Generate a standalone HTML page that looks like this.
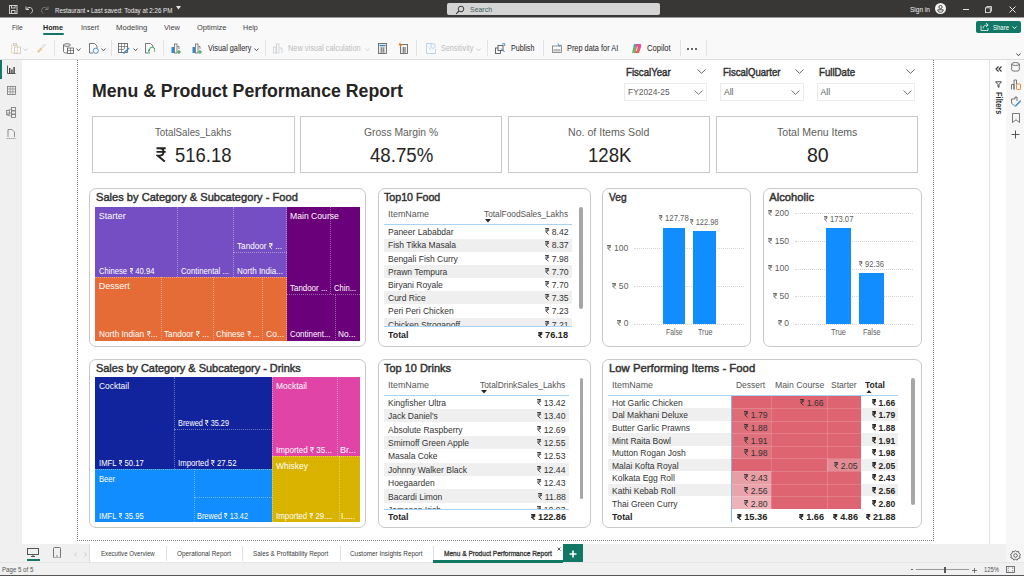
<!DOCTYPE html><html><head><meta charset="utf-8"><style>*{margin:0;padding:0}
html,body{width:1024px;height:576px;overflow:hidden;background:#fff;font-family:"Liberation Sans",sans-serif;}
.a{position:absolute}
.t{position:absolute;white-space:nowrap;line-height:normal;transform-origin:0 0}
.rs{display:inline-block;width:.5em;height:.69em;vertical-align:baseline;margin-right:0}
</style></head><body>
<div class="a" style="left:0.00px;top:0.00px;width:1024.00px;height:17.00px;background:#383735;"></div>
<div class="a" style="left:0.00px;top:17.00px;width:1024.00px;height:1.00px;background:#9a9998;"></div>
<svg class="a" style="left:8.00px;top:4.00px;" width="10" height="10" viewBox="0 0 10 10" fill="none"><rect x="1.5" y="1.5" width="7.5" height="8" stroke="#cfcfcf" stroke-width="1"/><rect x="3.5" y="1.5" width="3.5" height="2.5" stroke="#cfcfcf" stroke-width="1"/><rect x="3.5" y="6.5" width="3.5" height="3" stroke="#cfcfcf" stroke-width="1"/></svg>
<svg class="a" style="left:24.00px;top:4.00px;" width="10" height="10" viewBox="0 0 10 10" fill="none"><path d="M2 2.5 V5.5 H5" stroke="#cfcfcf" stroke-width="1"/><path d="M2.3 5.3 C4 2.5 8.5 3 8.5 6.5 C8.5 8 7.5 9 6.5 9.5" stroke="#cfcfcf" stroke-width="1"/></svg>
<svg class="a" style="left:40.00px;top:4.00px;" width="10" height="10" viewBox="0 0 10 10" fill="none"><path d="M8 2.5 V5.5 H5" stroke="#777" stroke-width="1"/><path d="M7.7 5.3 C6 2.5 1.5 3 1.5 6.5 C1.5 8 2.5 9 3.5 9.5" stroke="#777" stroke-width="1"/></svg>
<div class="t" style="left:54.50px;top:7.00px;font-size:6.686px;color:#ececec;transform:scaleX(0.9283);">Restaurant • Last saved: Today at 2:26 PM</div>
<svg class="a" style="left:175.50px;top:6.00px;" width="5" height="4" viewBox="0 0 5 4" fill="none"><path d="M0 0 H5 L2.5 3.5Z" fill="#e8e8e8"/></svg>
<div class="a" style="left:446.50px;top:3.00px;width:213.00px;height:12.00px;background:#d4d4d4;border-radius:2px;"></div>
<svg class="a" style="left:455.00px;top:4.50px;" width="10" height="10" viewBox="0 0 10 10" fill="none"><circle cx="6" cy="4" r="2.8" stroke="#3d3d3d" stroke-width="1"/><path d="M4 6 L1.2 8.8" stroke="#3d3d3d" stroke-width="1.1"/></svg>
<div class="t" style="left:470.00px;top:5.00px;font-size:7.267px;color:#3f5f63;transform:scaleX(0.9577);">Search</div>
<div class="t" style="left:910.00px;top:5.00px;font-size:7.267px;color:#f0f0f0;transform:scaleX(0.9022);">Sign in</div>
<svg class="a" style="left:935.00px;top:3.00px;" width="11" height="11" viewBox="0 0 11 11" fill="none"><circle cx="5.5" cy="5.5" r="5.5" fill="#f2f2f2"/><circle cx="5.5" cy="4" r="1.6" stroke="#383735" stroke-width=".9"/><path d="M2.8 6.8 H8.2 C8.2 8.5 7 9.3 5.5 9.3 C4 9.3 2.8 8.5 2.8 6.8Z" stroke="#383735" stroke-width=".9"/></svg>
<div class="a" style="left:962.50px;top:9.00px;width:6.00px;height:1.00px;background:#e0e0e0;"></div>
<svg class="a" style="left:985.00px;top:5.50px;" width="7" height="7" viewBox="0 0 7 7" fill="none"><rect x=".5" y="1.8" width="4.8" height="4.8" stroke="#e0e0e0" stroke-width=".9"/><path d="M1.8 1.8 V.5 H6.5 V5.2 H5.3" stroke="#e0e0e0" stroke-width=".9"/></svg>
<svg class="a" style="left:1009.00px;top:6.00px;" width="7" height="7" viewBox="0 0 7 7" fill="none"><path d="M.5 .5 L6.5 6.5 M6.5 .5 L.5 6.5" stroke="#f0f0f0" stroke-width="1"/></svg>
<div class="a" style="left:0.00px;top:18.00px;width:1024.00px;height:41.00px;background:#f9f9f9;"></div>
<div class="a" style="left:0.00px;top:59.00px;width:1024.00px;height:1.00px;background:#dcdcdc;"></div>
<div class="t" style="left:12.20px;top:23.00px;font-size:7.703px;color:#424242;transform:scaleX(0.8719);">File</div>
<div class="t" style="left:43.40px;top:23.00px;font-size:7.703px;color:#242424;transform:scaleX(0.9317);font-weight:bold;">Home</div>
<div class="t" style="left:80.50px;top:23.00px;font-size:7.703px;color:#424242;transform:scaleX(0.9310);">Insert</div>
<div class="t" style="left:115.60px;top:23.00px;font-size:7.703px;color:#424242;transform:scaleX(1.0033);">Modeling</div>
<div class="t" style="left:163.75px;top:23.00px;font-size:7.703px;color:#424242;transform:scaleX(0.9653);">View</div>
<div class="t" style="left:196.60px;top:23.00px;font-size:7.703px;color:#424242;transform:scaleX(0.9694);">Optimize</div>
<div class="t" style="left:243.30px;top:23.00px;font-size:7.703px;color:#424242;transform:scaleX(0.9298);">Help</div>
<div class="a" style="left:43.00px;top:33.00px;width:20.50px;height:2.00px;background:#117865;border-radius:1px;"></div>
<div class="a" style="left:54.40px;top:40.00px;width:1.00px;height:16.00px;background:#e3e3e3;"></div>
<div class="a" style="left:110.60px;top:40.00px;width:1.00px;height:16.00px;background:#e3e3e3;"></div>
<div class="a" style="left:162.50px;top:40.00px;width:1.00px;height:16.00px;background:#e3e3e3;"></div>
<div class="a" style="left:264.50px;top:40.00px;width:1.00px;height:16.00px;background:#e3e3e3;"></div>
<div class="a" style="left:416.40px;top:40.00px;width:1.00px;height:16.00px;background:#e3e3e3;"></div>
<div class="a" style="left:486.60px;top:40.00px;width:1.00px;height:16.00px;background:#e3e3e3;"></div>
<div class="a" style="left:543.30px;top:40.00px;width:1.00px;height:16.00px;background:#e3e3e3;"></div>
<div class="a" style="left:679.70px;top:40.00px;width:1.00px;height:16.00px;background:#e3e3e3;"></div>
<div class="a" style="left:705.50px;top:40.00px;width:1.00px;height:16.00px;background:#e3e3e3;"></div>
<svg class="a" style="left:10.50px;top:43.00px;" width="10" height="11" viewBox="0 0 10 11" fill="none"><rect x=".5" y="2" width="6" height="8" stroke="#e8b86a" stroke-width=".8" stroke-dasharray="1 .6"/><rect x="3.5" y="4" width="6" height="6.5" stroke="#c8c8c8" stroke-width=".8"/><rect x="2.5" y=".5" width="3" height="2" stroke="#c8c8c8" stroke-width=".7"/></svg>
<svg class="a" style="left:22.50px;top:47.50px;" width="5" height="3.5" viewBox="0 0 5 3.5" fill="none"><path d="M.5 .5 L2.5 2.7 L4.5 .5" stroke="#c8c8c8" stroke-width=".9"/></svg>
<svg class="a" style="left:36.00px;top:43.00px;" width="10" height="10" viewBox="0 0 10 10" fill="none"><path d="M1 8.5 L5 4.5 L6.5 6 L2.5 10Z" fill="#f0c890"/><path d="M5.5 4 L8.5 1 L9.5 2 L6.5 5Z" stroke="#d0d0d0" stroke-width=".8"/></svg>
<svg class="a" style="left:62.50px;top:43.00px;" width="11" height="11" viewBox="0 0 11 11" fill="none"><ellipse cx="4" cy="2" rx="3.5" ry="1.3" stroke="#555" stroke-width=".8"/><path d="M.5 2 V8.5 C.5 9.5 2 10 4 10" stroke="#555" stroke-width=".8"/><rect x="4.5" y="5" width="6" height="5.5" stroke="#555" stroke-width=".8"/><path d="M4.5 7.5 H10.5 M7.5 5 V10.5" stroke="#555" stroke-width=".6"/></svg>
<svg class="a" style="left:75.50px;top:47.50px;" width="5" height="3.5" viewBox="0 0 5 3.5" fill="none"><path d="M.5 .5 L2.5 2.7 L4.5 .5" stroke="#424242" stroke-width=".9"/></svg>
<svg class="a" style="left:88.50px;top:43.00px;" width="10" height="11" viewBox="0 0 10 11" fill="none"><path d="M.5 .5 H5.5 L8 3 V5" stroke="#555" stroke-width=".8"/><path d="M.5 .5 V10 H4" stroke="#555" stroke-width=".8"/><circle cx="6.8" cy="7.8" r="2.6" stroke="#3a86c8" stroke-width=".9"/></svg>
<svg class="a" style="left:100.50px;top:47.50px;" width="5" height="3.5" viewBox="0 0 5 3.5" fill="none"><path d="M.5 .5 L2.5 2.7 L4.5 .5" stroke="#424242" stroke-width=".9"/></svg>
<svg class="a" style="left:118.00px;top:43.00px;" width="12" height="11" viewBox="0 0 12 11" fill="none"><rect x=".5" y=".5" width="9" height="9" stroke="#555" stroke-width=".8"/><path d="M.5 3.5 H9.5 M.5 6.5 H6 M3.5 .5 V9.5 M6.5 .5 V6" stroke="#555" stroke-width=".6"/><path d="M5 10 L10.5 4.5 L11.5 5.5 L6 11Z" fill="#3a86c8"/></svg>
<svg class="a" style="left:132.50px;top:47.50px;" width="5" height="3.5" viewBox="0 0 5 3.5" fill="none"><path d="M.5 .5 L2.5 2.7 L4.5 .5" stroke="#424242" stroke-width=".9"/></svg>
<svg class="a" style="left:145.00px;top:43.00px;" width="10" height="11" viewBox="0 0 10 11" fill="none"><path d="M.5 .5 H5.5 L8 3 V4.5 M.5 .5 V10 H3.5" stroke="#555" stroke-width=".8"/><path d="M4.5 8 A2.8 2.8 0 1 1 9.3 8.8" stroke="#2f9e5a" stroke-width="1"/><path d="M5 10.5 A2.8 2.8 0 0 1 4.5 6" stroke="#2f9e5a" stroke-width="1"/></svg>
<svg class="a" style="left:171.00px;top:43.00px;" width="10" height="11" viewBox="0 0 10 11" fill="none"><rect x=".5" y="4" width="2.5" height="6" fill="#3a86c8"/><rect x="3.5" y="1" width="2.5" height="9" stroke="#555" stroke-width=".7"/><path d="M6.5 3.5 H8 V6" stroke="#555" stroke-width=".7"/><path d="M8 7 V11 M6 9 H10" stroke="#2f9e5a" stroke-width="1.1"/></svg>
<svg class="a" style="left:192.00px;top:43.00px;" width="10" height="11" viewBox="0 0 10 11" fill="none"><rect x=".5" y="4" width="2.5" height="6" fill="#3a86c8"/><rect x="3.5" y="1" width="2.5" height="9" stroke="#555" stroke-width=".7"/><path d="M6.5 3.5 H8 V6" stroke="#555" stroke-width=".7"/><path d="M8 7 V11 M6 9 H10" stroke="#2f9e5a" stroke-width="1.1"/></svg>
<div class="t" style="left:207.50px;top:44.00px;font-size:8.140px;color:#242424;transform:scaleX(0.8988);">Visual gallery</div>
<svg class="a" style="left:254.00px;top:47.50px;" width="5" height="3.5" viewBox="0 0 5 3.5" fill="none"><path d="M.5 .5 L2.5 2.7 L4.5 .5" stroke="#424242" stroke-width=".9"/></svg>
<svg class="a" style="left:272.50px;top:43.00px;" width="10" height="11" viewBox="0 0 10 11" fill="none"><rect x=".5" y="4" width="2.5" height="6" stroke="#c8c8c8" stroke-width=".7"/><rect x="3.5" y="1" width="2.5" height="9" stroke="#c8c8c8" stroke-width=".7"/><path d="M6.5 5 H9 V10" stroke="#b0c8dc" stroke-width=".7"/></svg>
<div class="t" style="left:288.30px;top:44.00px;font-size:8.140px;color:#bdbdbd;transform:scaleX(0.9095);">New visual calculation</div>
<svg class="a" style="left:365.00px;top:47.50px;" width="5" height="3.5" viewBox="0 0 5 3.5" fill="none"><path d="M.5 .5 L2.5 2.7 L4.5 .5" stroke="#cfcfcf" stroke-width=".9"/></svg>
<svg class="a" style="left:378.00px;top:43.00px;" width="9" height="11" viewBox="0 0 9 11" fill="none"><rect x=".5" y=".5" width="8" height="10" stroke="#555" stroke-width=".8"/><rect x="1.5" y="1.8" width="6" height="1.5" fill="#3a86c8"/><path d="M1.8 5 H7.2 M1.8 7 H7.2 M1.8 9 H7.2 M3.6 4.5 V9.5 M5.4 4.5 V9.5" stroke="#555" stroke-width=".6"/></svg>
<svg class="a" style="left:398.00px;top:42.00px;" width="10" height="12" viewBox="0 0 10 12" fill="none"><rect x="2.5" y="2.5" width="7" height="9" stroke="#555" stroke-width=".8"/><path d="M3.8 6 H8.2 M3.8 8 H8.2 M3.8 10 H8.2 M5.5 5 V10.5 M7 5 V10.5" stroke="#555" stroke-width=".6"/><path d="M2 0 L.5 3.5 H2.5 L1.5 6 L4.5 2.5 H2.8Z" fill="#e87a1e"/></svg>
<svg class="a" style="left:426.00px;top:43.00px;" width="10" height="11" viewBox="0 0 10 11" fill="none"><path d="M.5 .5 H6 M.5 .5 V10.5 H9.5 V6" stroke="#a8cce8" stroke-width=".8"/><circle cx="7" cy="3" r="2.3" stroke="#a8cce8" stroke-width=".8"/><path d="M2.5 4.5 L5 7" stroke="#a8cce8" stroke-width=".8"/></svg>
<div class="t" style="left:440.60px;top:44.00px;font-size:8.140px;color:#bdbdbd;transform:scaleX(0.8859);">Sensitivity</div>
<svg class="a" style="left:476.00px;top:47.50px;" width="5" height="3.5" viewBox="0 0 5 3.5" fill="none"><path d="M.5 .5 L2.5 2.7 L4.5 .5" stroke="#cfcfcf" stroke-width=".9"/></svg>
<svg class="a" style="left:495.00px;top:43.00px;" width="11" height="11" viewBox="0 0 11 11" fill="none"><rect x=".5" y="5" width="5" height="5.5" stroke="#444" stroke-width=".8"/><rect x="3" y="2.5" width="5" height="5" stroke="#444" stroke-width=".8" fill="#f9f9f9"/><path d="M6 5.5 L9.5 9" stroke="#3a86c8" stroke-width="1"/><path d="M7 1 L9.5 .5 L9.8 3" stroke="#3a86c8" stroke-width=".9"/></svg>
<div class="t" style="left:510.80px;top:44.00px;font-size:8.140px;color:#242424;transform:scaleX(0.8781);">Publish</div>
<svg class="a" style="left:551.50px;top:43.00px;" width="10" height="10" viewBox="0 0 10 10" fill="none"><rect x=".5" y="3" width="9" height="6.5" stroke="#777" stroke-width=".8"/><rect x="1.5" y="6" width="7" height="2.5" fill="#bbb"/><path d="M6 .5 L7 3 L9.5 2" stroke="#3a86c8" stroke-width=".9"/></svg>
<div class="t" style="left:567.00px;top:44.00px;font-size:8.140px;color:#242424;transform:scaleX(0.9067);">Prep data for AI</div>
<svg class="a" style="left:630.50px;top:43.00px;" width="11" height="11" viewBox="0 0 11 11" fill="none"><defs><linearGradient id="cg" x1="0" y1="0" x2="1" y2="1"><stop offset="0" stop-color="#2f8cf0"/><stop offset=".5" stop-color="#52c46a"/><stop offset="1" stop-color="#f0a030"/></linearGradient><linearGradient id="cg2" x1="1" y1="0" x2="0" y2="1"><stop offset="0" stop-color="#e040c0"/><stop offset="1" stop-color="#f07030"/></linearGradient></defs><path d="M3 1 H7 L5 10 H1 Z" fill="url(#cg)"/><path d="M5 1 H9 C10.5 1 10.5 3 10 4 L8 10 H4Z" fill="url(#cg2)"/><path d="M5.3 8 L6.3 3.5" stroke="#fff" stroke-width=".8"/></svg>
<div class="t" style="left:646.60px;top:44.00px;font-size:8.140px;color:#242424;transform:scaleX(0.9371);">Copilot</div>
<div class="a" style="left:687.00px;top:48.00px;width:2.00px;height:2.00px;background:#333;border-radius:1px;"></div>
<div class="a" style="left:691.00px;top:48.00px;width:2.00px;height:2.00px;background:#333;border-radius:1px;"></div>
<div class="a" style="left:695.00px;top:48.00px;width:2.00px;height:2.00px;background:#333;border-radius:1px;"></div>
<div class="a" style="left:976.00px;top:20.50px;width:45.00px;height:12.00px;background:#117865;border-radius:2px;"></div>
<svg class="a" style="left:980.00px;top:22.00px;" width="10" height="9" viewBox="0 0 10 9" fill="none"><path d="M1 3.5 V8.5 H8 V6" stroke="#fff" stroke-width=".8"/><path d="M3 6.5 C3 4 5 3 7.5 3 M6 1 L8.2 3 L6 5" stroke="#fff" stroke-width=".8"/></svg>
<div class="t" style="left:992.50px;top:24.00px;font-size:6.831px;color:#ffffff;transform:scaleX(0.8781);">Share</div>
<svg class="a" style="left:1011.50px;top:25.50px;" width="5" height="3.5" viewBox="0 0 5 3.5" fill="none"><path d="M.5 .5 L2.5 2.7 L4.5 .5" stroke="#ffffff" stroke-width=".9"/></svg>
<svg class="a" style="left:1015.50px;top:52.50px;" width="5" height="3.5" viewBox="0 0 5 3.5" fill="none"><path d="M.5 .5 L2.5 2.7 L4.5 .5" stroke="#333333" stroke-width=".9"/></svg>
<div class="a" style="left:0.00px;top:60.00px;width:22.00px;height:502.00px;background:#f0f0f0;"></div>
<div class="a" style="left:21.50px;top:60.00px;width:0.50px;height:484.00px;background:#e4e4e4;"></div>
<div class="a" style="left:0.00px;top:59.50px;width:2.00px;height:19.80px;background:#117865;"></div>
<svg class="a" style="left:6.50px;top:64.50px;" width="9" height="9" viewBox="0 0 9 9" fill="none"><path d="M.5 .5 V8.5 H8.5" stroke="#444" stroke-width=".9"/><rect x="2" y="3" width="1.4" height="5" fill="#444"/><rect x="4.2" y="4.5" width="1.4" height="3.5" fill="#444"/><rect x="6.4" y="2" width="1.4" height="6" fill="#444"/></svg>
<svg class="a" style="left:6.50px;top:86.00px;" width="9" height="9" viewBox="0 0 9 9" fill="none"><rect x=".5" y=".5" width="8" height="8" stroke="#777" stroke-width=".8"/><path d="M.5 3 H8.5 M.5 5.8 H8.5 M3.2 .5 V8.5 M5.8 .5 V8.5" stroke="#777" stroke-width=".6"/></svg>
<svg class="a" style="left:6.00px;top:106.50px;" width="10" height="11" viewBox="0 0 10 11" fill="none"><rect x="5.5" y=".5" width="4" height="3" stroke="#777" stroke-width=".8"/><rect x="5.5" y="4" width="4" height="3" stroke="#777" stroke-width=".8"/><rect x="5.5" y="7.5" width="4" height="3" stroke="#777" stroke-width=".8"/><path d="M.5 4 L5.5 2 M.5 6 H5.5 M.5 8 L5.5 9" stroke="#777" stroke-width=".7"/><rect x=".5" y="3.5" width="3" height="4" stroke="#777" stroke-width=".7"/></svg>
<svg class="a" style="left:6.00px;top:128.50px;" width="10" height="10" viewBox="0 0 10 10" fill="none"><path d="M2 8 V.5 H6 L8.5 3 V8" stroke="#777" stroke-width=".8"/><path d="M.5 9.5 H9.5" stroke="#777" stroke-width=".8" stroke-dasharray="1.2 .8"/></svg>
<div class="a" style="left:22.00px;top:60.00px;width:967.00px;height:484.00px;background:#ffffff;"></div>
<div class="a" style="left:77px;top:60px;width:855px;height:480px;border-right:1px dotted #7a7a7a;border-left:1px dotted #7a7a7a;border-bottom:1px dotted #7a7a7a;"></div>
<div class="a" style="left:988.50px;top:60.00px;width:17.50px;height:484.00px;background:#ffffff;border-left:1.5px solid #e2e2e2;box-sizing:border-box;"></div>
<div class="a" style="left:1006.00px;top:60.00px;width:18.00px;height:484.00px;background:#f7f7f7;"></div>
<svg class="a" style="left:994.50px;top:66.00px;" width="7" height="6" viewBox="0 0 7 6" fill="none"><path d="M3.5 .5 L1 3 L3.5 5.5 M6.5 .5 L4 3 L6.5 5.5" stroke="#333" stroke-width="1.1"/></svg>
<svg class="a" style="left:995.00px;top:80.50px;" width="7" height="7" viewBox="0 0 7 7" fill="none"><path d="M.6 .8 H6.4 L4 3.6 V6.4 L3 5.8 V3.6 Z" stroke="#333" stroke-width=".9" stroke-linejoin="round"/></svg>
<div class="t" style="left:993.9px;top:91.6px;font-size:8.7px;font-weight:bold;color:#333;transform-origin:0 0;transform:translate(10px,0) rotate(90deg) scaleX(.86);">Filters</div>
<svg class="a" style="left:1011.00px;top:62.00px;" width="9" height="10" viewBox="0 0 9 10" fill="none"><ellipse cx="4.5" cy="2" rx="3.8" ry="1.5" stroke="#555" stroke-width=".8"/><path d="M.7 2 V8 C.7 9.5 8.3 9.5 8.3 8 V2" stroke="#555" stroke-width=".8"/></svg>
<svg class="a" style="left:1010.50px;top:79.00px;" width="10" height="11" viewBox="0 0 10 11" fill="none"><path d="M.5 10.5 V5.5 H3 V10.5 M3 10.5 V1 H5.5 V5" stroke="#555" stroke-width=".8"/><rect x="5.5" y="5" width="4" height="5.5" rx=".8" stroke="#e87a1e" stroke-width=".9"/></svg>
<svg class="a" style="left:1010.50px;top:96.00px;" width="10" height="11" viewBox="0 0 10 11" fill="none"><path d="M.5 6 V3 H4 V1 H6 V5" stroke="#555" stroke-width=".8"/><path d="M.5 6 C.5 8 2 9 3.5 9" stroke="#555" stroke-width=".8"/><path d="M3 10.5 L9.5 4 L10 5.5 L5 10.5Z" fill="#3a86c8"/></svg>
<svg class="a" style="left:1011.50px;top:113.00px;" width="8" height="10" viewBox="0 0 8 10" fill="none"><path d="M.5 .5 H7.5 V9.5 L4 6.8 L.5 9.5Z" stroke="#555" stroke-width=".8"/></svg>
<svg class="a" style="left:1010.50px;top:130.00px;" width="9" height="9" viewBox="0 0 9 9" fill="none"><path d="M4.5 .5 V8.5 M.5 4.5 H8.5" stroke="#444" stroke-width=".9"/></svg>
<div class="t" style="left:92.20px;top:81.00px;font-size:18.023px;color:#252423;transform:scaleX(0.9825);font-weight:bold;">Menu &amp; Product Performance Report</div>
<div class="t" style="left:625.70px;top:67.00px;font-size:10.320px;color:#333333;transform:scaleX(0.9358);-webkit-text-stroke:.45px #333333;">FiscalYear</div>
<svg class="a" style="left:697.30px;top:68.80px;" width="9" height="5" viewBox="0 0 9 5" fill="none"><path d="M.5 .5 L4.5 4.3 L8.5 .5" stroke="#555" stroke-width=".9"/></svg>
<div class="a" style="left:624.00px;top:82.50px;width:82.80px;height:18.00px;background:#fff;border:1px solid #ebebeb;box-sizing:border-box;"></div>
<div class="t" style="left:628.00px;top:87.00px;font-size:8.576px;color:#605e5c;transform:scaleX(0.9819);">FY2024-25</div>
<svg class="a" style="left:694.30px;top:89.50px;" width="9" height="5" viewBox="0 0 9 5" fill="none"><path d="M.5 .5 L4.5 4.3 L8.5 .5" stroke="#666" stroke-width=".9"/></svg>
<div class="t" style="left:722.60px;top:67.00px;font-size:10.320px;color:#333333;transform:scaleX(0.9275);-webkit-text-stroke:.45px #333333;">FiscalQuarter</div>
<svg class="a" style="left:794.60px;top:68.80px;" width="9" height="5" viewBox="0 0 9 5" fill="none"><path d="M.5 .5 L4.5 4.3 L8.5 .5" stroke="#555" stroke-width=".9"/></svg>
<div class="a" style="left:720.00px;top:82.50px;width:83.70px;height:18.00px;background:#fff;border:1px solid #ebebeb;box-sizing:border-box;"></div>
<div class="t" style="left:724.00px;top:87.00px;font-size:8.576px;color:#605e5c;">All</div>
<svg class="a" style="left:791.20px;top:89.50px;" width="9" height="5" viewBox="0 0 9 5" fill="none"><path d="M.5 .5 L4.5 4.3 L8.5 .5" stroke="#666" stroke-width=".9"/></svg>
<div class="t" style="left:818.60px;top:67.00px;font-size:10.320px;color:#333333;transform:scaleX(0.9401);-webkit-text-stroke:.45px #333333;">FullDate</div>
<svg class="a" style="left:906.40px;top:68.80px;" width="9" height="5" viewBox="0 0 9 5" fill="none"><path d="M.5 .5 L4.5 4.3 L8.5 .5" stroke="#555" stroke-width=".9"/></svg>
<div class="a" style="left:816.60px;top:82.50px;width:98.90px;height:18.00px;background:#fff;border:1px solid #ebebeb;box-sizing:border-box;"></div>
<div class="t" style="left:820.60px;top:87.00px;font-size:8.576px;color:#605e5c;">All</div>
<svg class="a" style="left:903.00px;top:89.50px;" width="9" height="5" viewBox="0 0 9 5" fill="none"><path d="M.5 .5 L4.5 4.3 L8.5 .5" stroke="#666" stroke-width=".9"/></svg>
<div class="a" style="left:92.00px;top:115.50px;width:202.50px;height:57.00px;background:#fff;border:1px solid #c8c8c8;box-sizing:border-box;"></div>
<div class="t" style="left:155.10px;top:126.00px;font-size:10.901px;color:#605e5c;transform:scaleX(0.8938);">TotalSales_Lakhs</div>
<svg class="a" style="left:156.10px;top:147.20px;" width="10.2" height="15.2" viewBox="0 0 10.2 15.2" fill="none"><path d="M.5 1.2 H9.7 M.5 4.9 H9.7 M.8 1.2 H3.8 C7 1.2 7.5 3.4 7.5 4.9 C7.5 7.3 5.6 8.6 3.4 8.6 H1.6 L8.8 14.6" stroke="#252423" stroke-width="1.9"/></svg>
<div class="t" style="left:174.90px;top:144.00px;font-size:20.349px;color:#252423;transform:scaleX(0.9071);">516.18</div>
<div class="a" style="left:300.00px;top:115.50px;width:202.00px;height:57.00px;background:#fff;border:1px solid #c8c8c8;box-sizing:border-box;"></div>
<div class="t" style="left:363.90px;top:126.00px;font-size:10.901px;color:#605e5c;transform:scaleX(0.9504);">Gross Margin %</div>
<div class="t" style="left:370.40px;top:144.00px;font-size:20.349px;color:#252423;transform:scaleX(0.9167);">48.75%</div>
<div class="a" style="left:507.50px;top:115.50px;width:202.50px;height:57.00px;background:#fff;border:1px solid #c8c8c8;box-sizing:border-box;"></div>
<div class="t" style="left:568.10px;top:126.00px;font-size:10.901px;color:#605e5c;transform:scaleX(0.9733);">No. of Items Sold</div>
<div class="t" style="left:588.00px;top:144.00px;font-size:20.349px;color:#252423;transform:scaleX(0.9163);">128K</div>
<div class="a" style="left:715.50px;top:115.50px;width:202.50px;height:57.00px;background:#fff;border:1px solid #c8c8c8;box-sizing:border-box;"></div>
<div class="t" style="left:776.55px;top:126.00px;font-size:10.901px;color:#605e5c;transform:scaleX(0.9696);">Total Menu Items</div>
<div class="t" style="left:806.90px;top:144.00px;font-size:20.349px;color:#252423;transform:scaleX(0.9597);">80</div>
<div class="a" style="left:89.20px;top:187.60px;width:276.60px;height:159.40px;background:#fff;border:1px solid #c8c8c8;border-radius:7px;box-sizing:border-box;"></div>
<div class="t" style="left:95.70px;top:191.00px;font-size:11.192px;color:#333333;transform:scaleX(0.9924);-webkit-text-stroke:.45px #333333;">Sales by Category &amp; Subcategory - Food</div>
<div class="a" style="left:95.00px;top:206.80px;width:191.70px;height:70.00px;background:#744EC2;"></div>
<div class="a" style="left:95.00px;top:276.80px;width:191.70px;height:64.00px;background:#E66C37;"></div>
<div class="a" style="left:286.70px;top:206.80px;width:73.10px;height:134.00px;background:#6B007B;"></div>
<div class="a" style="left:177.40px;top:206.80px;width:0;height:70.00px;border-left:1px dotted rgba(255,255,255,.38)"></div>
<div class="a" style="left:232.60px;top:206.80px;width:0;height:70.00px;border-left:1px dotted rgba(255,255,255,.38)"></div>
<div class="a" style="left:233.30px;top:252.10px;width:53.40px;height:0;border-top:1px dotted rgba(255,255,255,.38)"></div>
<div class="a" style="left:160.50px;top:276.80px;width:0;height:63.50px;border-left:1px dotted rgba(255,255,255,.38)"></div>
<div class="a" style="left:212.70px;top:276.80px;width:0;height:63.50px;border-left:1px dotted rgba(255,255,255,.38)"></div>
<div class="a" style="left:262.30px;top:276.80px;width:0;height:63.50px;border-left:1px dotted rgba(255,255,255,.38)"></div>
<div class="a" style="left:330.00px;top:206.80px;width:0;height:87.20px;border-left:1px dotted rgba(255,255,255,.38)"></div>
<div class="a" style="left:286.70px;top:294.00px;width:73.10px;height:0;border-top:1px dotted rgba(255,255,255,.38)"></div>
<div class="a" style="left:334.60px;top:294.70px;width:0;height:45.60px;border-left:1px dotted rgba(255,255,255,.38)"></div>
<div class="a" style="left:286.40px;top:206.80px;width:0;height:133.50px;border-left:1px dotted rgba(255,255,255,.38)"></div>
<div class="a" style="left:95.00px;top:276.60px;width:191.70px;height:0;border-top:1px dotted rgba(255,255,255,.38)"></div>
<div class="t" style="left:98.80px;top:211.00px;font-size:9.012px;color:#ffffff;">Starter</div>
<div class="t" style="left:98.80px;top:266.00px;font-size:9.012px;color:#ffffff;transform:scaleX(0.8517);">Chinese <svg class="rs" viewBox="0 0 10 14"><path d="M.5 1.2H9.5M.5 4.6H9.5M.8 1.2H3.5C6.3 1.2 7 3.2 7 4.6 7 6.8 5.2 8 3.2 8H1.5L8.2 13.6" stroke="currentColor" stroke-width="2" fill="none"/></svg> 40.94</div>
<div class="t" style="left:181.00px;top:266.00px;font-size:9.012px;color:#ffffff;transform:scaleX(0.8643);">Continental ...</div>
<div class="t" style="left:236.50px;top:241.00px;font-size:9.012px;color:#ffffff;transform:scaleX(0.9085);">Tandoor <svg class="rs" viewBox="0 0 10 14"><path d="M.5 1.2H9.5M.5 4.6H9.5M.8 1.2H3.5C6.3 1.2 7 3.2 7 4.6 7 6.8 5.2 8 3.2 8H1.5L8.2 13.6" stroke="currentColor" stroke-width="2" fill="none"/></svg> ...</div>
<div class="t" style="left:236.50px;top:266.00px;font-size:9.012px;color:#ffffff;transform:scaleX(0.8928);">North India...</div>
<div class="t" style="left:98.80px;top:281.00px;font-size:9.012px;color:#ffffff;">Dessert</div>
<div class="t" style="left:98.80px;top:329.00px;font-size:9.012px;color:#ffffff;transform:scaleX(0.9207);">North Indian <svg class="rs" viewBox="0 0 10 14"><path d="M.5 1.2H9.5M.5 4.6H9.5M.8 1.2H3.5C6.3 1.2 7 3.2 7 4.6 7 6.8 5.2 8 3.2 8H1.5L8.2 13.6" stroke="currentColor" stroke-width="2" fill="none"/></svg>...</div>
<div class="t" style="left:164.00px;top:329.00px;font-size:9.012px;color:#ffffff;transform:scaleX(0.9085);">Tandoor <svg class="rs" viewBox="0 0 10 14"><path d="M.5 1.2H9.5M.5 4.6H9.5M.8 1.2H3.5C6.3 1.2 7 3.2 7 4.6 7 6.8 5.2 8 3.2 8H1.5L8.2 13.6" stroke="currentColor" stroke-width="2" fill="none"/></svg> ...</div>
<div class="t" style="left:216.00px;top:329.00px;font-size:9.012px;color:#ffffff;transform:scaleX(0.8695);">Chinese <svg class="rs" viewBox="0 0 10 14"><path d="M.5 1.2H9.5M.5 4.6H9.5M.8 1.2H3.5C6.3 1.2 7 3.2 7 4.6 7 6.8 5.2 8 3.2 8H1.5L8.2 13.6" stroke="currentColor" stroke-width="2" fill="none"/></svg> ...</div>
<div class="t" style="left:265.50px;top:329.00px;font-size:9.012px;color:#ffffff;transform:scaleX(0.9471);">Co...</div>
<div class="t" style="left:290.00px;top:211.00px;font-size:9.012px;color:#ffffff;transform:scaleX(0.9584);">Main Course</div>
<div class="t" style="left:290.00px;top:283.00px;font-size:9.012px;color:#ffffff;transform:scaleX(0.8818);">Tandoor ...</div>
<div class="t" style="left:333.50px;top:283.00px;font-size:9.012px;color:#ffffff;transform:scaleX(0.8458);">Chin...</div>
<div class="t" style="left:290.00px;top:329.00px;font-size:9.012px;color:#ffffff;transform:scaleX(0.8799);">Continent...</div>
<div class="t" style="left:338.00px;top:329.00px;font-size:9.012px;color:#ffffff;transform:scaleX(0.9207);">No...</div>
<div class="a" style="left:377.70px;top:187.60px;width:212.90px;height:159.40px;background:#fff;border:1px solid #c8c8c8;border-radius:7px;box-sizing:border-box;"></div>
<div class="t" style="left:384.20px;top:191.00px;font-size:11.192px;color:#333333;transform:scaleX(0.9528);-webkit-text-stroke:.45px #333333;">Top10 Food</div>
<div class="t" style="left:387.70px;top:209.00px;font-size:9.157px;color:#555555;transform:scaleX(0.9725);">ItemName</div>
<div class="t" style="left:484.20px;top:209.00px;font-size:9.157px;color:#555555;transform:scaleX(0.9094);">TotalFoodSales_Lakhs</div>
<svg class="a" style="left:484.50px;top:219.00px;" width="6" height="3.5" viewBox="0 0 6 3.5" fill="none"><path d="M0 0 H6 L3 3.5Z" fill="#252423"/></svg>
<div class="a" style="left:384.00px;top:223.60px;width:188.20px;height:1.00px;background:#a9d3f5;"></div>
<div class="t" style="left:387.70px;top:226.00px;font-size:9.448px;color:#333333;transform:scaleX(0.9000);">Paneer Lababdar</div>
<div class="t" style="left:544.64px;top:226.00px;font-size:9.448px;color:#333333;transform:scaleX(0.9200);"><svg class="rs" viewBox="0 0 10 14"><path d="M.5 1.2H9.5M.5 4.6H9.5M.8 1.2H3.5C6.3 1.2 7 3.2 7 4.6 7 6.8 5.2 8 3.2 8H1.5L8.2 13.6" stroke="currentColor" stroke-width="2" fill="none"/></svg> 8.42</div>
<div class="a" style="left:384.00px;top:238.50px;width:188.20px;height:13.20px;background:#efefef;"></div>
<div class="t" style="left:387.70px;top:239.00px;font-size:9.448px;color:#333333;transform:scaleX(0.9000);">Fish Tikka Masala</div>
<div class="t" style="left:544.64px;top:239.00px;font-size:9.448px;color:#333333;transform:scaleX(0.9200);"><svg class="rs" viewBox="0 0 10 14"><path d="M.5 1.2H9.5M.5 4.6H9.5M.8 1.2H3.5C6.3 1.2 7 3.2 7 4.6 7 6.8 5.2 8 3.2 8H1.5L8.2 13.6" stroke="currentColor" stroke-width="2" fill="none"/></svg> 8.37</div>
<div class="t" style="left:387.70px;top:253.00px;font-size:9.448px;color:#333333;transform:scaleX(0.9000);">Bengali Fish Curry</div>
<div class="t" style="left:544.64px;top:253.00px;font-size:9.448px;color:#333333;transform:scaleX(0.9200);"><svg class="rs" viewBox="0 0 10 14"><path d="M.5 1.2H9.5M.5 4.6H9.5M.8 1.2H3.5C6.3 1.2 7 3.2 7 4.6 7 6.8 5.2 8 3.2 8H1.5L8.2 13.6" stroke="currentColor" stroke-width="2" fill="none"/></svg> 7.98</div>
<div class="a" style="left:384.00px;top:264.90px;width:188.20px;height:13.20px;background:#efefef;"></div>
<div class="t" style="left:387.70px;top:266.00px;font-size:9.448px;color:#333333;transform:scaleX(0.9000);">Prawn Tempura</div>
<div class="t" style="left:544.64px;top:266.00px;font-size:9.448px;color:#333333;transform:scaleX(0.9200);"><svg class="rs" viewBox="0 0 10 14"><path d="M.5 1.2H9.5M.5 4.6H9.5M.8 1.2H3.5C6.3 1.2 7 3.2 7 4.6 7 6.8 5.2 8 3.2 8H1.5L8.2 13.6" stroke="currentColor" stroke-width="2" fill="none"/></svg> 7.70</div>
<div class="t" style="left:387.70px;top:279.00px;font-size:9.448px;color:#333333;transform:scaleX(0.9000);">Biryani Royale</div>
<div class="t" style="left:544.64px;top:279.00px;font-size:9.448px;color:#333333;transform:scaleX(0.9200);"><svg class="rs" viewBox="0 0 10 14"><path d="M.5 1.2H9.5M.5 4.6H9.5M.8 1.2H3.5C6.3 1.2 7 3.2 7 4.6 7 6.8 5.2 8 3.2 8H1.5L8.2 13.6" stroke="currentColor" stroke-width="2" fill="none"/></svg> 7.70</div>
<div class="a" style="left:384.00px;top:291.30px;width:188.20px;height:13.20px;background:#efefef;"></div>
<div class="t" style="left:387.70px;top:292.00px;font-size:9.448px;color:#333333;transform:scaleX(0.9000);">Curd Rice</div>
<div class="t" style="left:544.64px;top:292.00px;font-size:9.448px;color:#333333;transform:scaleX(0.9200);"><svg class="rs" viewBox="0 0 10 14"><path d="M.5 1.2H9.5M.5 4.6H9.5M.8 1.2H3.5C6.3 1.2 7 3.2 7 4.6 7 6.8 5.2 8 3.2 8H1.5L8.2 13.6" stroke="currentColor" stroke-width="2" fill="none"/></svg> 7.35</div>
<div class="t" style="left:387.70px;top:305.00px;font-size:9.448px;color:#333333;transform:scaleX(0.9000);">Peri Peri Chicken</div>
<div class="t" style="left:544.64px;top:305.00px;font-size:9.448px;color:#333333;transform:scaleX(0.9200);"><svg class="rs" viewBox="0 0 10 14"><path d="M.5 1.2H9.5M.5 4.6H9.5M.8 1.2H3.5C6.3 1.2 7 3.2 7 4.6 7 6.8 5.2 8 3.2 8H1.5L8.2 13.6" stroke="currentColor" stroke-width="2" fill="none"/></svg> 7.23</div>
<div class="a" style="left:384.00px;top:317.70px;width:188.20px;height:8.80px;background:#efefef;"></div>
<div class="a" style="left:384px;top:318px;width:190px;height:8.5px;overflow:hidden;"><div class="t" style="left:3.70px;top:1.00px;font-size:9.448px;color:#333333;transform:scaleX(0.9000);">Chicken Stroganoff</div><div class="t" style="left:160.64px;top:1.00px;font-size:9.448px;color:#333333;transform:scaleX(0.9200);"><svg class="rs" viewBox="0 0 10 14"><path d="M.5 1.2H9.5M.5 4.6H9.5M.8 1.2H3.5C6.3 1.2 7 3.2 7 4.6 7 6.8 5.2 8 3.2 8H1.5L8.2 13.6" stroke="currentColor" stroke-width="2" fill="none"/></svg> 7.21</div></div>
<div class="a" style="left:384.00px;top:326.40px;width:188.20px;height:1.00px;background:#a9d3f5;"></div>
<div class="t" style="left:388.30px;top:330.00px;font-size:9.012px;color:#252423;transform:scaleX(0.9842);font-weight:bold;">Total</div>
<div class="t" style="left:538.30px;top:330.00px;font-size:9.012px;color:#252423;transform:scaleX(1.0160);font-weight:bold;"><svg class="rs" viewBox="0 0 10 14"><path d="M.5 1.3H9.5M.5 4.7H9.5M.8 1.3H3.5C6.3 1.3 7 3.2 7 4.7 7 6.8 5.2 8 3.2 8H1.8L8.2 13.4" stroke="currentColor" stroke-width="2.5" fill="none"/></svg> 76.18</div>
<div class="a" style="left:579.20px;top:207.40px;width:4.20px;height:101.40px;background:#a6a6a6;border-radius:2px;"></div>
<div class="a" style="left:602.30px;top:187.60px;width:148.30px;height:159.40px;background:#fff;border:1px solid #c8c8c8;border-radius:7px;box-sizing:border-box;"></div>
<div class="t" style="left:608.80px;top:191.00px;font-size:11.192px;color:#333333;transform:scaleX(0.9125);-webkit-text-stroke:.45px #333333;">Veg</div>
<div class="a" style="left:634.00px;top:248.10px;width:109.70px;height:0;border-top:1px dotted #d6d6d6;"></div>
<div class="t" style="left:607.45px;top:243.00px;font-size:8.576px;color:#605e5c;"><svg class="rs" viewBox="0 0 10 14"><path d="M.5 1.2H9.5M.5 4.6H9.5M.8 1.2H3.5C6.3 1.2 7 3.2 7 4.6 7 6.8 5.2 8 3.2 8H1.5L8.2 13.6" stroke="currentColor" stroke-width="2" fill="none"/></svg> 100</div>
<div class="a" style="left:634.00px;top:285.80px;width:109.70px;height:0;border-top:1px dotted #d6d6d6;"></div>
<div class="t" style="left:612.21px;top:281.00px;font-size:8.576px;color:#605e5c;"><svg class="rs" viewBox="0 0 10 14"><path d="M.5 1.2H9.5M.5 4.6H9.5M.8 1.2H3.5C6.3 1.2 7 3.2 7 4.6 7 6.8 5.2 8 3.2 8H1.5L8.2 13.6" stroke="currentColor" stroke-width="2" fill="none"/></svg> 50</div>
<div class="a" style="left:634.00px;top:323.60px;width:109.70px;height:0;border-top:1px dotted #d6d6d6;"></div>
<div class="t" style="left:616.97px;top:318.00px;font-size:8.576px;color:#605e5c;"><svg class="rs" viewBox="0 0 10 14"><path d="M.5 1.2H9.5M.5 4.6H9.5M.8 1.2H3.5C6.3 1.2 7 3.2 7 4.6 7 6.8 5.2 8 3.2 8H1.5L8.2 13.6" stroke="currentColor" stroke-width="2" fill="none"/></svg> 0</div>
<div class="a" style="left:662.60px;top:227.70px;width:22.70px;height:96.40px;background:#118DFF;"></div>
<div class="a" style="left:692.80px;top:231.00px;width:23.10px;height:93.10px;background:#118DFF;"></div>
<div class="t" style="left:659.05px;top:213.00px;font-size:8.576px;color:#605e5c;transform:scaleX(0.9039);"><svg class="rs" viewBox="0 0 10 14"><path d="M.5 1.2H9.5M.5 4.6H9.5M.8 1.2H3.5C6.3 1.2 7 3.2 7 4.6 7 6.8 5.2 8 3.2 8H1.5L8.2 13.6" stroke="currentColor" stroke-width="2" fill="none"/></svg> 127.78</div>
<div class="t" style="left:690.30px;top:217.00px;font-size:8.576px;color:#605e5c;transform:scaleX(0.8644);"><svg class="rs" viewBox="0 0 10 14"><path d="M.5 1.2H9.5M.5 4.6H9.5M.8 1.2H3.5C6.3 1.2 7 3.2 7 4.6 7 6.8 5.2 8 3.2 8H1.5L8.2 13.6" stroke="currentColor" stroke-width="2" fill="none"/></svg> 122.98</div>
<div class="t" style="left:666.40px;top:327.00px;font-size:8.576px;color:#605e5c;transform:scaleX(0.7928);">False</div>
<div class="t" style="left:697.75px;top:327.00px;font-size:8.576px;color:#605e5c;transform:scaleX(0.8387);">True</div>
<div class="a" style="left:762.80px;top:187.60px;width:159.40px;height:159.40px;background:#fff;border:1px solid #c8c8c8;border-radius:7px;box-sizing:border-box;"></div>
<div class="t" style="left:769.30px;top:191.00px;font-size:11.192px;color:#333333;-webkit-text-stroke:.45px #333333;">Alcoholic</div>
<div class="a" style="left:795.30px;top:213.30px;width:118.10px;height:0;border-top:1px dotted #d6d6d6;"></div>
<div class="t" style="left:768.05px;top:208.00px;font-size:8.576px;color:#605e5c;"><svg class="rs" viewBox="0 0 10 14"><path d="M.5 1.2H9.5M.5 4.6H9.5M.8 1.2H3.5C6.3 1.2 7 3.2 7 4.6 7 6.8 5.2 8 3.2 8H1.5L8.2 13.6" stroke="currentColor" stroke-width="2" fill="none"/></svg> 200</div>
<div class="a" style="left:795.30px;top:240.80px;width:118.10px;height:0;border-top:1px dotted #d6d6d6;"></div>
<div class="t" style="left:768.05px;top:236.00px;font-size:8.576px;color:#605e5c;"><svg class="rs" viewBox="0 0 10 14"><path d="M.5 1.2H9.5M.5 4.6H9.5M.8 1.2H3.5C6.3 1.2 7 3.2 7 4.6 7 6.8 5.2 8 3.2 8H1.5L8.2 13.6" stroke="currentColor" stroke-width="2" fill="none"/></svg> 150</div>
<div class="a" style="left:795.30px;top:268.60px;width:118.10px;height:0;border-top:1px dotted #d6d6d6;"></div>
<div class="t" style="left:768.05px;top:263.00px;font-size:8.576px;color:#605e5c;"><svg class="rs" viewBox="0 0 10 14"><path d="M.5 1.2H9.5M.5 4.6H9.5M.8 1.2H3.5C6.3 1.2 7 3.2 7 4.6 7 6.8 5.2 8 3.2 8H1.5L8.2 13.6" stroke="currentColor" stroke-width="2" fill="none"/></svg> 100</div>
<div class="a" style="left:795.30px;top:295.80px;width:118.10px;height:0;border-top:1px dotted #d6d6d6;"></div>
<div class="t" style="left:772.81px;top:291.00px;font-size:8.576px;color:#605e5c;"><svg class="rs" viewBox="0 0 10 14"><path d="M.5 1.2H9.5M.5 4.6H9.5M.8 1.2H3.5C6.3 1.2 7 3.2 7 4.6 7 6.8 5.2 8 3.2 8H1.5L8.2 13.6" stroke="currentColor" stroke-width="2" fill="none"/></svg> 50</div>
<div class="a" style="left:795.30px;top:323.60px;width:118.10px;height:0;border-top:1px dotted #d6d6d6;"></div>
<div class="t" style="left:777.57px;top:318.00px;font-size:8.576px;color:#605e5c;"><svg class="rs" viewBox="0 0 10 14"><path d="M.5 1.2H9.5M.5 4.6H9.5M.8 1.2H3.5C6.3 1.2 7 3.2 7 4.6 7 6.8 5.2 8 3.2 8H1.5L8.2 13.6" stroke="currentColor" stroke-width="2" fill="none"/></svg> 0</div>
<div class="a" style="left:825.90px;top:228.40px;width:25.00px;height:95.70px;background:#118DFF;"></div>
<div class="a" style="left:858.70px;top:272.80px;width:25.50px;height:51.30px;background:#118DFF;"></div>
<div class="t" style="left:823.70px;top:214.00px;font-size:8.576px;color:#605e5c;transform:scaleX(0.8948);"><svg class="rs" viewBox="0 0 10 14"><path d="M.5 1.2H9.5M.5 4.6H9.5M.8 1.2H3.5C6.3 1.2 7 3.2 7 4.6 7 6.8 5.2 8 3.2 8H1.5L8.2 13.6" stroke="currentColor" stroke-width="2" fill="none"/></svg> 173.07</div>
<div class="t" style="left:859.20px;top:259.00px;font-size:8.576px;color:#605e5c;transform:scaleX(0.8899);"><svg class="rs" viewBox="0 0 10 14"><path d="M.5 1.2H9.5M.5 4.6H9.5M.8 1.2H3.5C6.3 1.2 7 3.2 7 4.6 7 6.8 5.2 8 3.2 8H1.5L8.2 13.6" stroke="currentColor" stroke-width="2" fill="none"/></svg> 92.36</div>
<div class="t" style="left:831.40px;top:327.00px;font-size:8.576px;color:#605e5c;transform:scaleX(0.8561);">True</div>
<div class="t" style="left:863.35px;top:327.00px;font-size:8.576px;color:#605e5c;transform:scaleX(0.8358);">False</div>
<div class="a" style="left:89.20px;top:358.80px;width:276.60px;height:169.20px;background:#fff;border:1px solid #c8c8c8;border-radius:7px;box-sizing:border-box;"></div>
<div class="t" style="left:95.70px;top:362.00px;font-size:11.192px;color:#333333;transform:scaleX(0.9773);-webkit-text-stroke:.45px #333333;">Sales by Category &amp; Subcategory - Drinks</div>
<div class="a" style="left:95.40px;top:377.30px;width:176.70px;height:91.80px;background:#12239E;"></div>
<div class="a" style="left:95.40px;top:469.10px;width:176.70px;height:52.50px;background:#118DFF;"></div>
<div class="a" style="left:272.10px;top:377.30px;width:87.50px;height:78.90px;background:#E044A7;"></div>
<div class="a" style="left:272.10px;top:456.20px;width:87.50px;height:65.40px;background:#D9B300;"></div>
<div class="a" style="left:173.50px;top:377.30px;width:0;height:91.80px;border-left:1px dotted rgba(255,255,255,.38)"></div>
<div class="a" style="left:174.20px;top:429.20px;width:97.90px;height:0;border-top:1px dotted rgba(255,255,255,.38)"></div>
<div class="a" style="left:193.70px;top:469.10px;width:0;height:52.50px;border-left:1px dotted rgba(255,255,255,.38)"></div>
<div class="a" style="left:194.40px;top:497.10px;width:77.70px;height:0;border-top:1px dotted rgba(255,255,255,.38)"></div>
<div class="a" style="left:336.70px;top:377.30px;width:0;height:78.90px;border-left:1px dotted rgba(255,255,255,.38)"></div>
<div class="a" style="left:338.60px;top:456.20px;width:0;height:65.40px;border-left:1px dotted rgba(255,255,255,.38)"></div>
<div class="a" style="left:271.80px;top:377.30px;width:0;height:144.30px;border-left:1px dotted rgba(255,255,255,.38)"></div>
<div class="a" style="left:95.40px;top:468.80px;width:176.70px;height:0;border-top:1px dotted rgba(255,255,255,.38)"></div>
<div class="a" style="left:272.10px;top:455.90px;width:87.50px;height:0;border-top:1px dotted rgba(255,255,255,.38)"></div>
<div class="t" style="left:98.90px;top:381.00px;font-size:9.012px;color:#ffffff;transform:scaleX(0.9372);">Cocktail</div>
<div class="t" style="left:98.90px;top:458.00px;font-size:9.012px;color:#ffffff;transform:scaleX(0.8567);">IMFL <svg class="rs" viewBox="0 0 10 14"><path d="M.5 1.2H9.5M.5 4.6H9.5M.8 1.2H3.5C6.3 1.2 7 3.2 7 4.6 7 6.8 5.2 8 3.2 8H1.5L8.2 13.6" stroke="currentColor" stroke-width="2" fill="none"/></svg> 50.17</div>
<div class="t" style="left:177.50px;top:418.00px;font-size:9.012px;color:#ffffff;transform:scaleX(0.8154);">Brewed <svg class="rs" viewBox="0 0 10 14"><path d="M.5 1.2H9.5M.5 4.6H9.5M.8 1.2H3.5C6.3 1.2 7 3.2 7 4.6 7 6.8 5.2 8 3.2 8H1.5L8.2 13.6" stroke="currentColor" stroke-width="2" fill="none"/></svg> 35.29</div>
<div class="t" style="left:177.50px;top:458.00px;font-size:9.012px;color:#ffffff;transform:scaleX(0.8661);">Imported <svg class="rs" viewBox="0 0 10 14"><path d="M.5 1.2H9.5M.5 4.6H9.5M.8 1.2H3.5C6.3 1.2 7 3.2 7 4.6 7 6.8 5.2 8 3.2 8H1.5L8.2 13.6" stroke="currentColor" stroke-width="2" fill="none"/></svg> 27.52</div>
<div class="t" style="left:98.90px;top:474.00px;font-size:9.012px;color:#ffffff;transform:scaleX(0.8416);">Beer</div>
<div class="t" style="left:98.90px;top:511.00px;font-size:9.012px;color:#ffffff;transform:scaleX(0.8567);">IMFL <svg class="rs" viewBox="0 0 10 14"><path d="M.5 1.2H9.5M.5 4.6H9.5M.8 1.2H3.5C6.3 1.2 7 3.2 7 4.6 7 6.8 5.2 8 3.2 8H1.5L8.2 13.6" stroke="currentColor" stroke-width="2" fill="none"/></svg> 35.95</div>
<div class="t" style="left:197.20px;top:511.00px;font-size:9.012px;color:#ffffff;transform:scaleX(0.8154);">Brewed <svg class="rs" viewBox="0 0 10 14"><path d="M.5 1.2H9.5M.5 4.6H9.5M.8 1.2H3.5C6.3 1.2 7 3.2 7 4.6 7 6.8 5.2 8 3.2 8H1.5L8.2 13.6" stroke="currentColor" stroke-width="2" fill="none"/></svg> 13.42</div>
<div class="t" style="left:275.60px;top:381.00px;font-size:9.012px;color:#ffffff;transform:scaleX(0.9392);">Mocktail</div>
<div class="t" style="left:275.60px;top:445.00px;font-size:9.012px;color:#ffffff;transform:scaleX(0.8955);">Imported <svg class="rs" viewBox="0 0 10 14"><path d="M.5 1.2H9.5M.5 4.6H9.5M.8 1.2H3.5C6.3 1.2 7 3.2 7 4.6 7 6.8 5.2 8 3.2 8H1.5L8.2 13.6" stroke="currentColor" stroke-width="2" fill="none"/></svg> 35...</div>
<div class="t" style="left:340.00px;top:445.00px;font-size:9.012px;color:#ffffff;">Br...</div>
<div class="t" style="left:275.60px;top:461.00px;font-size:9.012px;color:#ffffff;transform:scaleX(0.9410);">Whiskey</div>
<div class="t" style="left:275.60px;top:511.00px;font-size:9.012px;color:#ffffff;transform:scaleX(0.8764);">Imported <svg class="rs" viewBox="0 0 10 14"><path d="M.5 1.2H9.5M.5 4.6H9.5M.8 1.2H3.5C6.3 1.2 7 3.2 7 4.6 7 6.8 5.2 8 3.2 8H1.5L8.2 13.6" stroke="currentColor" stroke-width="2" fill="none"/></svg> 29....</div>
<div class="t" style="left:341.30px;top:511.00px;font-size:9.012px;color:#ffffff;transform:scaleX(0.9332);">I.....</div>
<div class="a" style="left:377.70px;top:358.80px;width:212.90px;height:169.20px;background:#fff;border:1px solid #c8c8c8;border-radius:7px;box-sizing:border-box;"></div>
<div class="t" style="left:384.20px;top:362.00px;font-size:11.192px;color:#333333;transform:scaleX(0.9796);-webkit-text-stroke:.45px #333333;">Top 10 Drinks</div>
<div class="t" style="left:387.70px;top:380.00px;font-size:9.157px;color:#555555;transform:scaleX(0.9725);">ItemName</div>
<div class="t" style="left:480.20px;top:380.00px;font-size:9.157px;color:#555555;transform:scaleX(0.9174);">TotalDrinkSales_Lakhs</div>
<svg class="a" style="left:480.50px;top:390.00px;" width="6" height="3.5" viewBox="0 0 6 3.5" fill="none"><path d="M0 0 H6 L3 3.5Z" fill="#252423"/></svg>
<div class="a" style="left:384.00px;top:395.00px;width:185.40px;height:1.00px;background:#a9d3f5;"></div>
<div class="t" style="left:387.70px;top:397.00px;font-size:9.448px;color:#333333;transform:scaleX(0.9000);">Kingfisher Ultra</div>
<div class="t" style="left:537.01px;top:397.00px;font-size:9.448px;color:#333333;transform:scaleX(0.9200);"><svg class="rs" viewBox="0 0 10 14"><path d="M.5 1.2H9.5M.5 4.6H9.5M.8 1.2H3.5C6.3 1.2 7 3.2 7 4.6 7 6.8 5.2 8 3.2 8H1.5L8.2 13.6" stroke="currentColor" stroke-width="2" fill="none"/></svg> 13.42</div>
<div class="a" style="left:384.00px;top:409.00px;width:185.40px;height:13.40px;background:#efefef;"></div>
<div class="t" style="left:387.70px;top:410.00px;font-size:9.448px;color:#333333;transform:scaleX(0.9000);">Jack Daniel&#x27;s</div>
<div class="t" style="left:537.01px;top:410.00px;font-size:9.448px;color:#333333;transform:scaleX(0.9200);"><svg class="rs" viewBox="0 0 10 14"><path d="M.5 1.2H9.5M.5 4.6H9.5M.8 1.2H3.5C6.3 1.2 7 3.2 7 4.6 7 6.8 5.2 8 3.2 8H1.5L8.2 13.6" stroke="currentColor" stroke-width="2" fill="none"/></svg> 13.40</div>
<div class="t" style="left:387.70px;top:424.00px;font-size:9.448px;color:#333333;transform:scaleX(0.9000);">Absolute Raspberry</div>
<div class="t" style="left:537.01px;top:424.00px;font-size:9.448px;color:#333333;transform:scaleX(0.9200);"><svg class="rs" viewBox="0 0 10 14"><path d="M.5 1.2H9.5M.5 4.6H9.5M.8 1.2H3.5C6.3 1.2 7 3.2 7 4.6 7 6.8 5.2 8 3.2 8H1.5L8.2 13.6" stroke="currentColor" stroke-width="2" fill="none"/></svg> 12.69</div>
<div class="a" style="left:384.00px;top:435.80px;width:185.40px;height:13.40px;background:#efefef;"></div>
<div class="t" style="left:387.70px;top:437.00px;font-size:9.448px;color:#333333;transform:scaleX(0.9000);">Smirnoff Green Apple</div>
<div class="t" style="left:537.01px;top:437.00px;font-size:9.448px;color:#333333;transform:scaleX(0.9200);"><svg class="rs" viewBox="0 0 10 14"><path d="M.5 1.2H9.5M.5 4.6H9.5M.8 1.2H3.5C6.3 1.2 7 3.2 7 4.6 7 6.8 5.2 8 3.2 8H1.5L8.2 13.6" stroke="currentColor" stroke-width="2" fill="none"/></svg> 12.55</div>
<div class="t" style="left:387.70px;top:450.00px;font-size:9.448px;color:#333333;transform:scaleX(0.9000);">Masala Coke</div>
<div class="t" style="left:537.01px;top:450.00px;font-size:9.448px;color:#333333;transform:scaleX(0.9200);"><svg class="rs" viewBox="0 0 10 14"><path d="M.5 1.2H9.5M.5 4.6H9.5M.8 1.2H3.5C6.3 1.2 7 3.2 7 4.6 7 6.8 5.2 8 3.2 8H1.5L8.2 13.6" stroke="currentColor" stroke-width="2" fill="none"/></svg> 12.53</div>
<div class="a" style="left:384.00px;top:462.60px;width:185.40px;height:13.40px;background:#efefef;"></div>
<div class="t" style="left:387.70px;top:464.00px;font-size:9.448px;color:#333333;transform:scaleX(0.9000);">Johnny Walker Black</div>
<div class="t" style="left:537.01px;top:464.00px;font-size:9.448px;color:#333333;transform:scaleX(0.9200);"><svg class="rs" viewBox="0 0 10 14"><path d="M.5 1.2H9.5M.5 4.6H9.5M.8 1.2H3.5C6.3 1.2 7 3.2 7 4.6 7 6.8 5.2 8 3.2 8H1.5L8.2 13.6" stroke="currentColor" stroke-width="2" fill="none"/></svg> 12.44</div>
<div class="t" style="left:387.70px;top:477.00px;font-size:9.448px;color:#333333;transform:scaleX(0.9000);">Hoegaarden</div>
<div class="t" style="left:537.01px;top:477.00px;font-size:9.448px;color:#333333;transform:scaleX(0.9200);"><svg class="rs" viewBox="0 0 10 14"><path d="M.5 1.2H9.5M.5 4.6H9.5M.8 1.2H3.5C6.3 1.2 7 3.2 7 4.6 7 6.8 5.2 8 3.2 8H1.5L8.2 13.6" stroke="currentColor" stroke-width="2" fill="none"/></svg> 12.43</div>
<div class="a" style="left:384.00px;top:489.40px;width:185.40px;height:13.40px;background:#efefef;"></div>
<div class="t" style="left:387.70px;top:491.00px;font-size:9.448px;color:#333333;transform:scaleX(0.9000);">Bacardi Limon</div>
<div class="t" style="left:537.66px;top:491.00px;font-size:9.448px;color:#333333;transform:scaleX(0.9200);"><svg class="rs" viewBox="0 0 10 14"><path d="M.5 1.2H9.5M.5 4.6H9.5M.8 1.2H3.5C6.3 1.2 7 3.2 7 4.6 7 6.8 5.2 8 3.2 8H1.5L8.2 13.6" stroke="currentColor" stroke-width="2" fill="none"/></svg> 11.88</div>
<div class="a" style="left:384px;top:502.80px;width:186px;height:5.80px;overflow:hidden;"><div class="t" style="left:3.70px;top:1.00px;font-size:9.448px;color:#333333;transform:scaleX(0.9000);">Jameson Irish</div><div class="t" style="left:153.01px;top:1.00px;font-size:9.448px;color:#333333;transform:scaleX(0.9200);"><svg class="rs" viewBox="0 0 10 14"><path d="M.5 1.2H9.5M.5 4.6H9.5M.8 1.2H3.5C6.3 1.2 7 3.2 7 4.6 7 6.8 5.2 8 3.2 8H1.5L8.2 13.6" stroke="currentColor" stroke-width="2" fill="none"/></svg> 10.93</div></div>
<div class="a" style="left:384.00px;top:508.60px;width:185.40px;height:1.00px;background:#a9d3f5;"></div>
<div class="t" style="left:388.30px;top:512.00px;font-size:9.012px;color:#252423;transform:scaleX(0.9842);font-weight:bold;">Total</div>
<div class="t" style="left:530.50px;top:512.00px;font-size:9.012px;color:#252423;transform:scaleX(1.0135);font-weight:bold;"><svg class="rs" viewBox="0 0 10 14"><path d="M.5 1.3H9.5M.5 4.7H9.5M.8 1.3H3.5C6.3 1.3 7 3.2 7 4.7 7 6.8 5.2 8 3.2 8H1.8L8.2 13.4" stroke="currentColor" stroke-width="2.5" fill="none"/></svg> 122.86</div>
<div class="a" style="left:579.70px;top:378.00px;width:3.80px;height:121.00px;background:#a6a6a6;border-radius:2px;"></div>
<div class="a" style="left:602.30px;top:358.80px;width:319.90px;height:169.20px;background:#fff;border:1px solid #c8c8c8;border-radius:7px;box-sizing:border-box;"></div>
<div class="t" style="left:608.80px;top:362.00px;font-size:11.192px;color:#333333;transform:scaleX(1.0135);-webkit-text-stroke:.45px #333333;">Low Performing Items - Food</div>
<div class="t" style="left:611.70px;top:380.00px;font-size:9.157px;color:#555555;transform:scaleX(0.9725);">ItemName</div>
<div class="t" style="left:736.20px;top:380.00px;font-size:9.157px;color:#555555;transform:scaleX(0.9272);">Dessert</div>
<div class="t" style="left:774.50px;top:380.00px;font-size:9.157px;color:#555555;transform:scaleX(0.9514);">Main Course</div>
<div class="t" style="left:831.10px;top:380.00px;font-size:9.157px;color:#555555;transform:scaleX(0.9369);">Starter</div>
<div class="t" style="left:865.00px;top:380.00px;font-size:9.157px;color:#252423;transform:scaleX(0.9360);font-weight:bold;">Total</div>
<svg class="a" style="left:865.50px;top:389.50px;" width="6" height="3.5" viewBox="0 0 6 3.5" fill="none"><path d="M0 3.5 H6 L3 0Z" fill="#252423"/></svg>
<div class="a" style="left:608.00px;top:395.00px;width:290.40px;height:1.00px;background:#a9d3f5;"></div>
<div class="a" style="left:732.30px;top:395.60px;width:38.70px;height:12.60px;background:#DD6470;"></div>
<div class="a" style="left:771.00px;top:395.60px;width:56.40px;height:12.60px;background:#DD6470;"></div>
<div class="t" style="left:800.24px;top:397.00px;font-size:9.448px;color:#333333;transform:scaleX(0.9200);"><svg class="rs" viewBox="0 0 10 14"><path d="M.5 1.2H9.5M.5 4.6H9.5M.8 1.2H3.5C6.3 1.2 7 3.2 7 4.6 7 6.8 5.2 8 3.2 8H1.5L8.2 13.6" stroke="currentColor" stroke-width="2" fill="none"/></svg> 1.66</div>
<div class="a" style="left:827.40px;top:395.60px;width:33.40px;height:12.60px;background:#DD6470;"></div>
<div class="t" style="left:611.70px;top:397.00px;font-size:9.448px;color:#333333;transform:scaleX(0.9000);">Hot Garlic Chicken</div>
<div class="t" style="left:872.36px;top:397.00px;font-size:9.448px;color:#252423;transform:scaleX(0.9000);font-weight:bold;"><svg class="rs" viewBox="0 0 10 14"><path d="M.5 1.3H9.5M.5 4.7H9.5M.8 1.3H3.5C6.3 1.3 7 3.2 7 4.7 7 6.8 5.2 8 3.2 8H1.8L8.2 13.4" stroke="currentColor" stroke-width="2.5" fill="none"/></svg> 1.66</div>
<div class="a" style="left:608.00px;top:408.20px;width:123.80px;height:12.60px;background:#efefef;"></div>
<div class="a" style="left:860.80px;top:408.20px;width:37.60px;height:12.60px;background:#efefef;"></div>
<div class="a" style="left:732.30px;top:408.20px;width:38.70px;height:12.60px;background:#DE6C77;"></div>
<div class="t" style="left:743.84px;top:409.00px;font-size:9.448px;color:#333333;transform:scaleX(0.9200);"><svg class="rs" viewBox="0 0 10 14"><path d="M.5 1.2H9.5M.5 4.6H9.5M.8 1.2H3.5C6.3 1.2 7 3.2 7 4.6 7 6.8 5.2 8 3.2 8H1.5L8.2 13.6" stroke="currentColor" stroke-width="2" fill="none"/></svg> 1.79</div>
<div class="a" style="left:771.00px;top:408.20px;width:56.40px;height:12.60px;background:#DD6470;"></div>
<div class="a" style="left:827.40px;top:408.20px;width:33.40px;height:12.60px;background:#DD6470;"></div>
<div class="t" style="left:611.70px;top:409.00px;font-size:9.448px;color:#333333;transform:scaleX(0.9000);">Dal Makhani Deluxe</div>
<div class="t" style="left:872.36px;top:409.00px;font-size:9.448px;color:#252423;transform:scaleX(0.9000);font-weight:bold;"><svg class="rs" viewBox="0 0 10 14"><path d="M.5 1.3H9.5M.5 4.7H9.5M.8 1.3H3.5C6.3 1.3 7 3.2 7 4.7 7 6.8 5.2 8 3.2 8H1.8L8.2 13.4" stroke="currentColor" stroke-width="2.5" fill="none"/></svg> 1.79</div>
<div class="a" style="left:732.30px;top:420.80px;width:38.70px;height:12.60px;background:#DF707B;"></div>
<div class="t" style="left:743.84px;top:422.00px;font-size:9.448px;color:#333333;transform:scaleX(0.9200);"><svg class="rs" viewBox="0 0 10 14"><path d="M.5 1.2H9.5M.5 4.6H9.5M.8 1.2H3.5C6.3 1.2 7 3.2 7 4.6 7 6.8 5.2 8 3.2 8H1.5L8.2 13.6" stroke="currentColor" stroke-width="2" fill="none"/></svg> 1.88</div>
<div class="a" style="left:771.00px;top:420.80px;width:56.40px;height:12.60px;background:#DD6470;"></div>
<div class="a" style="left:827.40px;top:420.80px;width:33.40px;height:12.60px;background:#DD6470;"></div>
<div class="t" style="left:611.70px;top:422.00px;font-size:9.448px;color:#333333;transform:scaleX(0.9000);">Butter Garlic Prawns</div>
<div class="t" style="left:872.36px;top:422.00px;font-size:9.448px;color:#252423;transform:scaleX(0.9000);font-weight:bold;"><svg class="rs" viewBox="0 0 10 14"><path d="M.5 1.3H9.5M.5 4.7H9.5M.8 1.3H3.5C6.3 1.3 7 3.2 7 4.7 7 6.8 5.2 8 3.2 8H1.8L8.2 13.4" stroke="currentColor" stroke-width="2.5" fill="none"/></svg> 1.88</div>
<div class="a" style="left:608.00px;top:433.40px;width:123.80px;height:12.60px;background:#efefef;"></div>
<div class="a" style="left:860.80px;top:433.40px;width:37.60px;height:12.60px;background:#efefef;"></div>
<div class="a" style="left:732.30px;top:433.40px;width:38.70px;height:12.60px;background:#DF717C;"></div>
<div class="t" style="left:743.84px;top:435.00px;font-size:9.448px;color:#333333;transform:scaleX(0.9200);"><svg class="rs" viewBox="0 0 10 14"><path d="M.5 1.2H9.5M.5 4.6H9.5M.8 1.2H3.5C6.3 1.2 7 3.2 7 4.6 7 6.8 5.2 8 3.2 8H1.5L8.2 13.6" stroke="currentColor" stroke-width="2" fill="none"/></svg> 1.91</div>
<div class="a" style="left:771.00px;top:433.40px;width:56.40px;height:12.60px;background:#DD6470;"></div>
<div class="a" style="left:827.40px;top:433.40px;width:33.40px;height:12.60px;background:#DD6470;"></div>
<div class="t" style="left:611.70px;top:435.00px;font-size:9.448px;color:#333333;transform:scaleX(0.9000);">Mint Raita Bowl</div>
<div class="t" style="left:872.36px;top:435.00px;font-size:9.448px;color:#252423;transform:scaleX(0.9000);font-weight:bold;"><svg class="rs" viewBox="0 0 10 14"><path d="M.5 1.3H9.5M.5 4.7H9.5M.8 1.3H3.5C6.3 1.3 7 3.2 7 4.7 7 6.8 5.2 8 3.2 8H1.8L8.2 13.4" stroke="currentColor" stroke-width="2.5" fill="none"/></svg> 1.91</div>
<div class="a" style="left:732.30px;top:446.00px;width:38.70px;height:12.60px;background:#E0747F;"></div>
<div class="t" style="left:743.84px;top:447.00px;font-size:9.448px;color:#333333;transform:scaleX(0.9200);"><svg class="rs" viewBox="0 0 10 14"><path d="M.5 1.2H9.5M.5 4.6H9.5M.8 1.2H3.5C6.3 1.2 7 3.2 7 4.6 7 6.8 5.2 8 3.2 8H1.5L8.2 13.6" stroke="currentColor" stroke-width="2" fill="none"/></svg> 1.98</div>
<div class="a" style="left:771.00px;top:446.00px;width:56.40px;height:12.60px;background:#DD6470;"></div>
<div class="a" style="left:827.40px;top:446.00px;width:33.40px;height:12.60px;background:#DD6470;"></div>
<div class="t" style="left:611.70px;top:447.00px;font-size:9.448px;color:#333333;transform:scaleX(0.9000);">Mutton Rogan Josh</div>
<div class="t" style="left:872.36px;top:447.00px;font-size:9.448px;color:#252423;transform:scaleX(0.9000);font-weight:bold;"><svg class="rs" viewBox="0 0 10 14"><path d="M.5 1.3H9.5M.5 4.7H9.5M.8 1.3H3.5C6.3 1.3 7 3.2 7 4.7 7 6.8 5.2 8 3.2 8H1.8L8.2 13.4" stroke="currentColor" stroke-width="2.5" fill="none"/></svg> 1.98</div>
<div class="a" style="left:608.00px;top:458.60px;width:123.80px;height:12.60px;background:#efefef;"></div>
<div class="a" style="left:860.80px;top:458.60px;width:37.60px;height:12.60px;background:#efefef;"></div>
<div class="a" style="left:732.30px;top:458.60px;width:38.70px;height:12.60px;background:#DD6470;"></div>
<div class="a" style="left:771.00px;top:458.60px;width:56.40px;height:12.60px;background:#DD6470;"></div>
<div class="a" style="left:827.40px;top:458.60px;width:33.40px;height:12.60px;background:#E38C95;"></div>
<div class="t" style="left:833.64px;top:460.00px;font-size:9.448px;color:#333333;transform:scaleX(0.9200);"><svg class="rs" viewBox="0 0 10 14"><path d="M.5 1.2H9.5M.5 4.6H9.5M.8 1.2H3.5C6.3 1.2 7 3.2 7 4.6 7 6.8 5.2 8 3.2 8H1.5L8.2 13.6" stroke="currentColor" stroke-width="2" fill="none"/></svg> 2.05</div>
<div class="t" style="left:611.70px;top:460.00px;font-size:9.448px;color:#333333;transform:scaleX(0.9000);">Malai Kofta Royal</div>
<div class="t" style="left:872.36px;top:460.00px;font-size:9.448px;color:#252423;transform:scaleX(0.9000);font-weight:bold;"><svg class="rs" viewBox="0 0 10 14"><path d="M.5 1.3H9.5M.5 4.7H9.5M.8 1.3H3.5C6.3 1.3 7 3.2 7 4.7 7 6.8 5.2 8 3.2 8H1.8L8.2 13.4" stroke="currentColor" stroke-width="2.5" fill="none"/></svg> 2.05</div>
<div class="a" style="left:732.30px;top:471.20px;width:38.70px;height:12.60px;background:#E89EA5;"></div>
<div class="t" style="left:743.84px;top:472.00px;font-size:9.448px;color:#333333;transform:scaleX(0.9200);"><svg class="rs" viewBox="0 0 10 14"><path d="M.5 1.2H9.5M.5 4.6H9.5M.8 1.2H3.5C6.3 1.2 7 3.2 7 4.6 7 6.8 5.2 8 3.2 8H1.5L8.2 13.6" stroke="currentColor" stroke-width="2" fill="none"/></svg> 2.43</div>
<div class="a" style="left:771.00px;top:471.20px;width:56.40px;height:12.60px;background:#DD6470;"></div>
<div class="a" style="left:827.40px;top:471.20px;width:33.40px;height:12.60px;background:#DD6470;"></div>
<div class="t" style="left:611.70px;top:472.00px;font-size:9.448px;color:#333333;transform:scaleX(0.9000);">Kolkata Egg Roll</div>
<div class="t" style="left:872.36px;top:472.00px;font-size:9.448px;color:#252423;transform:scaleX(0.9000);font-weight:bold;"><svg class="rs" viewBox="0 0 10 14"><path d="M.5 1.3H9.5M.5 4.7H9.5M.8 1.3H3.5C6.3 1.3 7 3.2 7 4.7 7 6.8 5.2 8 3.2 8H1.8L8.2 13.4" stroke="currentColor" stroke-width="2.5" fill="none"/></svg> 2.43</div>
<div class="a" style="left:608.00px;top:483.80px;width:123.80px;height:12.60px;background:#efefef;"></div>
<div class="a" style="left:860.80px;top:483.80px;width:37.60px;height:12.60px;background:#efefef;"></div>
<div class="a" style="left:732.30px;top:483.80px;width:38.70px;height:12.60px;background:#E9A4AB;"></div>
<div class="t" style="left:743.84px;top:485.00px;font-size:9.448px;color:#333333;transform:scaleX(0.9200);"><svg class="rs" viewBox="0 0 10 14"><path d="M.5 1.2H9.5M.5 4.6H9.5M.8 1.2H3.5C6.3 1.2 7 3.2 7 4.6 7 6.8 5.2 8 3.2 8H1.5L8.2 13.6" stroke="currentColor" stroke-width="2" fill="none"/></svg> 2.56</div>
<div class="a" style="left:771.00px;top:483.80px;width:56.40px;height:12.60px;background:#DD6470;"></div>
<div class="a" style="left:827.40px;top:483.80px;width:33.40px;height:12.60px;background:#DD6470;"></div>
<div class="t" style="left:611.70px;top:485.00px;font-size:9.448px;color:#333333;transform:scaleX(0.9000);">Kathi Kebab Roll</div>
<div class="t" style="left:872.36px;top:485.00px;font-size:9.448px;color:#252423;transform:scaleX(0.9000);font-weight:bold;"><svg class="rs" viewBox="0 0 10 14"><path d="M.5 1.3H9.5M.5 4.7H9.5M.8 1.3H3.5C6.3 1.3 7 3.2 7 4.7 7 6.8 5.2 8 3.2 8H1.8L8.2 13.4" stroke="currentColor" stroke-width="2.5" fill="none"/></svg> 2.56</div>
<div class="a" style="left:732.30px;top:496.40px;width:38.70px;height:12.60px;background:#EDB3B8;"></div>
<div class="t" style="left:743.84px;top:498.00px;font-size:9.448px;color:#333333;transform:scaleX(0.9200);"><svg class="rs" viewBox="0 0 10 14"><path d="M.5 1.2H9.5M.5 4.6H9.5M.8 1.2H3.5C6.3 1.2 7 3.2 7 4.6 7 6.8 5.2 8 3.2 8H1.5L8.2 13.6" stroke="currentColor" stroke-width="2" fill="none"/></svg> 2.80</div>
<div class="a" style="left:771.00px;top:496.40px;width:56.40px;height:12.60px;background:#DD6470;"></div>
<div class="a" style="left:827.40px;top:496.40px;width:33.40px;height:12.60px;background:#DD6470;"></div>
<div class="t" style="left:611.70px;top:498.00px;font-size:9.448px;color:#333333;transform:scaleX(0.9000);">Thai Green Curry</div>
<div class="t" style="left:872.36px;top:498.00px;font-size:9.448px;color:#252423;transform:scaleX(0.9000);font-weight:bold;"><svg class="rs" viewBox="0 0 10 14"><path d="M.5 1.3H9.5M.5 4.7H9.5M.8 1.3H3.5C6.3 1.3 7 3.2 7 4.7 7 6.8 5.2 8 3.2 8H1.8L8.2 13.4" stroke="currentColor" stroke-width="2.5" fill="none"/></svg> 2.80</div>
<div class="a" style="left:732.30px;top:407.90px;width:128.50px;height:0.60px;background:rgba(255,255,255,.16);"></div>
<div class="a" style="left:732.30px;top:420.50px;width:128.50px;height:0.60px;background:rgba(255,255,255,.16);"></div>
<div class="a" style="left:732.30px;top:433.10px;width:128.50px;height:0.60px;background:rgba(255,255,255,.16);"></div>
<div class="a" style="left:732.30px;top:445.70px;width:128.50px;height:0.60px;background:rgba(255,255,255,.16);"></div>
<div class="a" style="left:732.30px;top:458.30px;width:128.50px;height:0.60px;background:rgba(255,255,255,.16);"></div>
<div class="a" style="left:732.30px;top:470.90px;width:128.50px;height:0.60px;background:rgba(255,255,255,.16);"></div>
<div class="a" style="left:732.30px;top:483.50px;width:128.50px;height:0.60px;background:rgba(255,255,255,.16);"></div>
<div class="a" style="left:732.30px;top:496.10px;width:128.50px;height:0.60px;background:rgba(255,255,255,.16);"></div>
<div class="a" style="left:770.70px;top:395.60px;width:0.60px;height:113.40px;background:rgba(255,255,255,.16);"></div>
<div class="a" style="left:827.10px;top:395.60px;width:0.60px;height:113.40px;background:rgba(255,255,255,.16);"></div>
<div class="a" style="left:731.30px;top:395.60px;width:1.00px;height:126.40px;background:#7fb8ea;"></div>
<div class="t" style="left:612.20px;top:512.00px;font-size:9.012px;color:#252423;transform:scaleX(0.9842);font-weight:bold;">Total</div>
<div class="t" style="left:737.30px;top:512.00px;font-size:9.012px;color:#252423;transform:scaleX(1.0295);font-weight:bold;"><svg class="rs" viewBox="0 0 10 14"><path d="M.5 1.3H9.5M.5 4.7H9.5M.8 1.3H3.5C6.3 1.3 7 3.2 7 4.7 7 6.8 5.2 8 3.2 8H1.8L8.2 13.4" stroke="currentColor" stroke-width="2.5" fill="none"/></svg> 15.36</div>
<div class="t" style="left:799.40px;top:512.00px;font-size:9.012px;color:#252423;transform:scaleX(1.0195);font-weight:bold;"><svg class="rs" viewBox="0 0 10 14"><path d="M.5 1.3H9.5M.5 4.7H9.5M.8 1.3H3.5C6.3 1.3 7 3.2 7 4.7 7 6.8 5.2 8 3.2 8H1.8L8.2 13.4" stroke="currentColor" stroke-width="2.5" fill="none"/></svg> 1.66</div>
<div class="t" style="left:832.70px;top:512.00px;font-size:9.012px;color:#252423;transform:scaleX(1.0195);font-weight:bold;"><svg class="rs" viewBox="0 0 10 14"><path d="M.5 1.3H9.5M.5 4.7H9.5M.8 1.3H3.5C6.3 1.3 7 3.2 7 4.7 7 6.8 5.2 8 3.2 8H1.8L8.2 13.4" stroke="currentColor" stroke-width="2.5" fill="none"/></svg> 4.86</div>
<div class="t" style="left:866.00px;top:512.00px;font-size:9.012px;color:#252423;font-weight:bold;"><svg class="rs" viewBox="0 0 10 14"><path d="M.5 1.3H9.5M.5 4.7H9.5M.8 1.3H3.5C6.3 1.3 7 3.2 7 4.7 7 6.8 5.2 8 3.2 8H1.8L8.2 13.4" stroke="currentColor" stroke-width="2.5" fill="none"/></svg> 21.88</div>
<div class="a" style="left:910.80px;top:378.00px;width:4.40px;height:126.60px;background:#a6a6a6;border-radius:2px;"></div>
<div class="a" style="left:0.00px;top:544.00px;width:1024.00px;height:18.00px;background:#f0f0f0;"></div>
<div class="a" style="left:0.00px;top:562.00px;width:1024.00px;height:13.00px;background:#f0f0f0;border-top:1px solid #e6e6e6;box-sizing:border-box;"></div>
<div class="a" style="left:0.00px;top:575.00px;width:1024.00px;height:1.00px;background:#555555;"></div>
<div class="a" style="left:1006.00px;top:544.00px;width:18.00px;height:18.00px;background:#f5f5f5;"></div>
<svg class="a" style="left:27.00px;top:547.50px;" width="12" height="9" viewBox="0 0 12 9" fill="none"><rect x=".5" y=".5" width="11" height="6" stroke="#444" stroke-width=".9"/><path d="M4 8.5 H8 M6 6.5 V8.5" stroke="#444" stroke-width=".9"/></svg>
<div class="a" style="left:27.00px;top:559.00px;width:13.00px;height:1.50px;background:#117865;"></div>
<svg class="a" style="left:53.00px;top:546.50px;" width="8" height="11.5" viewBox="0 0 8 11.5" fill="none"><rect x=".5" y=".5" width="7" height="10.5" rx="1" stroke="#666" stroke-width=".9"/><path d="M3 9 H5" stroke="#666" stroke-width=".8"/></svg>
<svg class="a" style="left:73.50px;top:551.50px;" width="3" height="5" viewBox="0 0 3 5" fill="none"><path d="M2.5 .5 L.7 2.5 L2.5 4.5" stroke="#c0c0c0" stroke-width=".8"/></svg>
<svg class="a" style="left:84.00px;top:551.50px;" width="3" height="5" viewBox="0 0 3 5" fill="none"><path d="M.5 .5 L2.3 2.5 L.5 4.5" stroke="#c0c0c0" stroke-width=".8"/></svg>
<div class="a" style="left:89.00px;top:544.00px;width:1.00px;height:18.00px;background:#dcdcdc;"></div>
<div class="a" style="left:90.00px;top:544.00px;width:473.00px;height:18.00px;background:#ffffff;"></div>
<div class="a" style="left:165.50px;top:546.00px;width:0.80px;height:15.00px;background:#e0e0e0;"></div>
<div class="a" style="left:241.60px;top:546.00px;width:0.80px;height:15.00px;background:#e0e0e0;"></div>
<div class="a" style="left:339.50px;top:546.00px;width:0.80px;height:15.00px;background:#e0e0e0;"></div>
<div class="a" style="left:432.80px;top:546.00px;width:0.80px;height:15.00px;background:#e0e0e0;"></div>
<div class="t" style="left:101.00px;top:549.00px;font-size:7.267px;color:#3b3b3b;transform:scaleX(0.8451);">Executive Overview</div>
<div class="t" style="left:176.70px;top:549.00px;font-size:7.267px;color:#3b3b3b;transform:scaleX(0.8799);">Operational Report</div>
<div class="t" style="left:252.80px;top:549.00px;font-size:7.267px;color:#3b3b3b;transform:scaleX(0.8721);">Sales &amp; Profitability Report</div>
<div class="t" style="left:350.00px;top:549.00px;font-size:7.267px;color:#3b3b3b;transform:scaleX(0.8820);">Customer Insights Report</div>
<div class="t" style="left:443.70px;top:549.00px;font-size:7.267px;color:#333333;transform:scaleX(0.9038);-webkit-text-stroke:.3px #333333;">Menu &amp; Product Performance Report</div>
<div class="a" style="left:433.00px;top:560.00px;width:130.00px;height:2.50px;background:#117865;"></div>
<svg class="a" style="left:556.50px;top:547.00px;" width="4" height="4" viewBox="0 0 4 4" fill="none"><path d="M.5 .5 L3.5 3.5 M3.5 .5 L.5 3.5" stroke="#333" stroke-width=".8"/></svg>
<div class="a" style="left:563.00px;top:544.00px;width:20.00px;height:18.40px;background:#117865;"></div>
<svg class="a" style="left:569.00px;top:549.50px;" width="8" height="8" viewBox="0 0 8 8" fill="none"><path d="M4 .5 V7.5 M.5 4 H7.5" stroke="#fff" stroke-width="1.6"/></svg>
<svg class="a" style="left:1010.00px;top:549.50px;" width="11" height="11" viewBox="0 0 11 11" fill="none"><circle cx="5.5" cy="5.5" r="1.8" stroke="#444" stroke-width=".8"/><path d="M5.5 .6 L6.6 1.8 L8.5 1.4 L8.9 3.3 L10.4 4.4 L9.6 6.1 L10.1 8 L8.2 8.4 L7.2 10.1 L5.5 9.3 L3.8 10.1 L2.8 8.4 L.9 8 L1.4 6.1 L.6 4.4 L2.1 3.3 L2.5 1.4 L4.4 1.8Z" stroke="#444" stroke-width=".8"/></svg>
<div class="t" style="left:2.40px;top:566.00px;font-size:6.541px;color:#555555;transform:scaleX(0.9369);">Page 5 of 5</div>
<div class="a" style="left:910.50px;top:569.00px;width:2.50px;height:1.00px;background:#666;"></div>
<div class="a" style="left:915.50px;top:569.30px;width:53.50px;height:0.70px;background:#9a9a9a;"></div>
<div class="a" style="left:944.00px;top:566.50px;width:2.00px;height:6.00px;background:#555;"></div>
<svg class="a" style="left:972.00px;top:567.50px;" width="5" height="5" viewBox="0 0 5 5" fill="none"><path d="M2.5 0 V5 M0 2.5 H5" stroke="#555" stroke-width=".8"/></svg>
<div class="t" style="left:983.50px;top:566.00px;font-size:6.541px;color:#555555;transform:scaleX(0.8980);">125%</div>
<svg class="a" style="left:1005.50px;top:566.00px;" width="9" height="7" viewBox="0 0 9 7" fill="none"><rect x=".5" y=".5" width="8" height="6" stroke="#555" stroke-width=".8"/><path d="M2 2.5 V2 H3 M6 2 H7 V2.5 M2 4.5 V5 H3 M6 5 H7 V4.5" stroke="#555" stroke-width=".6"/></svg></body></html>
